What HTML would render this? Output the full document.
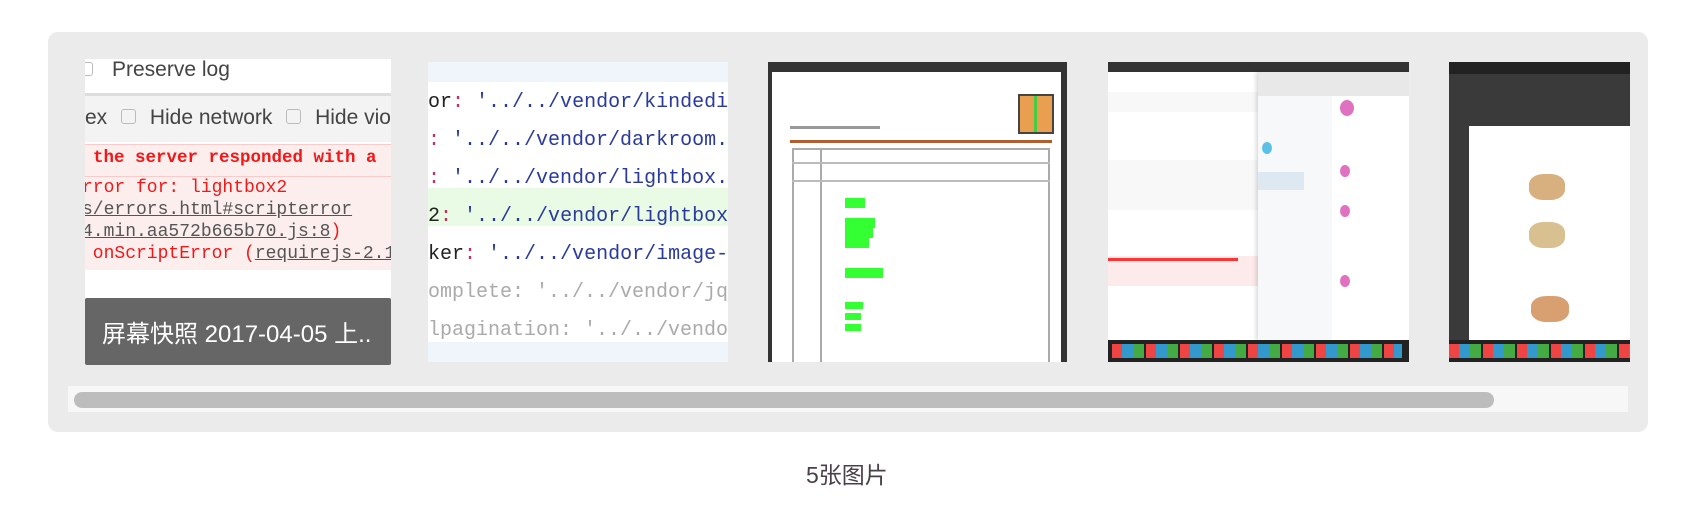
<!DOCTYPE html>
<html><head><meta charset="utf-8"><style>
*{margin:0;padding:0;box-sizing:border-box}
body{width:1698px;height:516px;background:#fff;position:relative;overflow:hidden;font-family:"Liberation Sans","Noto Sans CJK SC",sans-serif}
.box{position:absolute;left:48px;top:32px;width:1600px;height:400px;background:#ebebeb;border-radius:10px}
.t{position:absolute;overflow:hidden;background:#fff}
.track{position:absolute;left:68px;top:386px;width:1560px;height:26px;background:#f7f7f7}
.bar{position:absolute;left:74px;top:392px;width:1420px;height:16px;background:#bdbdbd;border-radius:8px}
.cap{position:absolute;left:806px;top:456px;font-size:23px;color:#4a4048;font-family:"Liberation Sans","Noto Sans CJK SC",sans-serif}
.mono{font-family:"Liberation Mono",monospace}
.cl{position:absolute;left:0;white-space:nowrap;font-size:20px}
.s{color:#2a3a9a}
</style></head><body>
<div class="box"></div>

<!-- thumb1 -->
<div class="t" style="left:85px;top:59px;width:306px;height:306px">
 <div style="position:absolute;left:-6px;top:3px;width:14px;height:14px;border:1px solid #bbb;border-radius:3px"></div>
 <div style="position:absolute;left:27px;top:-1px;font-size:21px;color:#444">Preserve log</div>
 <div style="position:absolute;left:0;top:34px;width:306px;height:3px;background:#ddd"></div>
 <div style="position:absolute;left:0;top:37px;width:306px;height:46px;background:#f3f3f3"></div>
 <div style="position:absolute;left:0;top:47px;font-size:21px;color:#444;white-space:nowrap">ex <span style="display:inline-block;width:15px;height:15px;border:1px solid #bbb;border-radius:3px;margin:0 8px"></span> Hide network <span style="display:inline-block;width:15px;height:15px;border:1px solid #bbb;border-radius:3px;margin:0 8px"></span> Hide viola</div>
 <div style="position:absolute;left:0;top:85px;width:306px;height:126px;background:#fdeeee;border-top:1px solid #f8caca"></div>
 <div style="position:absolute;left:0;top:117px;width:306px;height:1px;background:#f8caca"></div>
 <div class="mono" style="position:absolute;left:8px;top:89px;font-size:17.5px;color:#f01818;white-space:nowrap;font-weight:bold">the server responded with a</div>
 <div class="mono" style="position:absolute;left:-3px;top:118px;font-size:18px;color:#f01818;line-height:22px;white-space:pre">rror for: lightbox2
<span style="color:#555;text-decoration:underline">s/errors.html#scripterror</span>
<span style="color:#555;text-decoration:underline">4.min.aa572b665b70.js:8</span>)
 onScriptError (<span style="color:#555;text-decoration:underline">requirejs-2.1</span></div>
 <div style="position:absolute;left:0;top:239px;width:306px;height:67px;background:#666;border-radius:2px"></div>
 <div style="position:absolute;left:17px;top:255px;font-size:24px;color:#fff;white-space:nowrap">屏幕快照 2017-04-05 上..</div>
</div>

<!-- thumb2 -->
<div class="t mono" style="left:428px;top:62px;width:300px;height:300px">
 <div style="position:absolute;left:0;top:0;width:300px;height:20px;background:#f0f5fc"></div>
 <div style="position:absolute;left:0;top:280px;width:300px;height:20px;background:#f0f5fc"></div>
 <div style="position:absolute;left:0;top:126px;width:300px;height:38px;background:#e9fbe5"></div>
 <div class="cl" style="top:29px"><span style="color:#222">or</span><span style="color:#c03060">:</span> <span class="s">'../../vendor/kindedit</span></div>
 <div class="cl" style="top:67px"><span style="color:#c03060">:</span> <span class="s">'../../vendor/darkroom.m</span></div>
 <div class="cl" style="top:105px"><span style="color:#c03060">:</span> <span class="s">'../../vendor/lightbox.m</span></div>
 <div class="cl" style="top:143px"><span style="color:#222">2</span><span style="color:#c03060">:</span> <span class="s">'../../vendor/lightbox-</span></div>
 <div class="cl" style="top:181px"><span style="color:#222">ker</span><span style="color:#c03060">:</span> <span class="s">'../../vendor/image-p</span></div>
 <div class="cl" style="top:219px;color:#aaa">omplete: '../../vendor/jqu</div>
 <div class="cl" style="top:257px;color:#aaa">lpagination: '../../vendor</div>
</div>

<!-- thumb3 -->
<div class="t" style="left:768px;top:62px;width:299px;height:300px;background:#333">
 <div style="position:absolute;left:4px;top:10px;width:289px;height:300px;background:#fff"></div>
 <div style="position:absolute;left:250px;top:32px;width:36px;height:40px;border:2px solid #444;background:#e8a050"></div>
 <div style="position:absolute;left:266px;top:34px;width:3px;height:36px;background:#4c4"></div>
 <div style="position:absolute;left:22px;top:64px;width:90px;height:3px;background:#999"></div>
 <div style="position:absolute;left:22px;top:78px;width:262px;height:3px;background:#b06030"></div>
 <div style="position:absolute;left:24px;top:86px;width:258px;height:220px;border:2px solid #aaa"></div>
 <div style="position:absolute;left:52px;top:86px;width:2px;height:220px;background:#aaa"></div>
 <div style="position:absolute;left:24px;top:100px;width:258px;height:2px;background:#bbb"></div>
 <div style="position:absolute;left:24px;top:118px;width:258px;height:2px;background:#bbb"></div>
 <div style="position:absolute;left:77px;top:136px;width:20px;height:10px;background:#3f3"></div>
 <div style="position:absolute;left:77px;top:156px;width:30px;height:10px;background:#3f3"></div>
 <div style="position:absolute;left:77px;top:166px;width:28px;height:10px;background:#3f3"></div>
 <div style="position:absolute;left:77px;top:176px;width:24px;height:10px;background:#3f3"></div>
 <div style="position:absolute;left:77px;top:206px;width:38px;height:10px;background:#3f3"></div>
 <div style="position:absolute;left:77px;top:240px;width:18px;height:7px;background:#3f3"></div>
 <div style="position:absolute;left:77px;top:251px;width:16px;height:7px;background:#3f3"></div>
 <div style="position:absolute;left:77px;top:262px;width:16px;height:7px;background:#3f3"></div>
</div>

<!-- thumb4 -->
<div class="t" style="left:1108px;top:62px;width:301px;height:300px">
 <div style="position:absolute;left:0;top:0;width:301px;height:10px;background:#333"></div>
 <div style="position:absolute;left:0;top:30px;width:150px;height:20px;background:#f8f8f8"></div>
 <div style="position:absolute;left:0;top:98px;width:150px;height:50px;background:#f8f8f8"></div>
 <div style="position:absolute;left:0;top:194px;width:150px;height:30px;background:#fdeaea"></div>
 <div style="position:absolute;left:0;top:196px;width:130px;height:3px;background:#f33"></div>
 <div style="position:absolute;left:150px;top:10px;width:151px;height:268px;background:#f7f8fa;box-shadow:-2px 0 4px rgba(0,0,0,.15)"></div>
 <div style="position:absolute;left:150px;top:10px;width:151px;height:24px;background:#e8e8e8"></div>
 <div style="position:absolute;left:224px;top:34px;width:77px;height:244px;background:#fff"></div>
 <div style="position:absolute;left:150px;top:110px;width:46px;height:18px;background:#dde8f0"></div>
 <div style="position:absolute;left:232px;top:38px;width:14px;height:16px;border-radius:50%;background:#e070c0"></div>
 <div style="position:absolute;left:232px;top:103px;width:10px;height:12px;border-radius:50%;background:#e070c0"></div>
 <div style="position:absolute;left:232px;top:143px;width:10px;height:12px;border-radius:50%;background:#e070c0"></div>
 <div style="position:absolute;left:232px;top:213px;width:10px;height:12px;border-radius:50%;background:#e070c0"></div>
 <div style="position:absolute;left:154px;top:80px;width:10px;height:12px;border-radius:50%;background:#5bc0e8"></div>
 <div style="position:absolute;left:0;top:278px;width:301px;height:22px;background:#222"></div>
 <div style="position:absolute;left:4px;top:282px;width:290px;height:14px;background:repeating-linear-gradient(90deg,#e44 0 10px,#39c 10px 21px,#4a4 21px 32px,#222 32px 34px)"></div>
</div>

<!-- thumb5 -->
<div class="t" style="left:1449px;top:62px;width:181px;height:300px;background:#3a3a3a">
 <div style="position:absolute;left:0;top:0;width:181px;height:12px;background:#222"></div>
 <div style="position:absolute;left:20px;top:64px;width:161px;height:214px;background:#fff"></div>
 <div style="position:absolute;left:80px;top:112px;width:36px;height:26px;background:#d8b080;border-radius:40%"></div>
 <div style="position:absolute;left:80px;top:160px;width:36px;height:26px;background:#d8c090;border-radius:40%"></div>
 <div style="position:absolute;left:82px;top:234px;width:38px;height:26px;background:#d8a070;border-radius:40%"></div>
 <div style="position:absolute;left:0;top:278px;width:181px;height:22px;background:#222"></div>
 <div style="position:absolute;left:0;top:282px;width:181px;height:14px;background:repeating-linear-gradient(90deg,#e44 0 10px,#39c 10px 21px,#4a4 21px 32px,#222 32px 34px)"></div>
</div>

<div class="track"></div>
<div class="bar"></div>
<div class="cap">5张图片</div>
</body></html>
